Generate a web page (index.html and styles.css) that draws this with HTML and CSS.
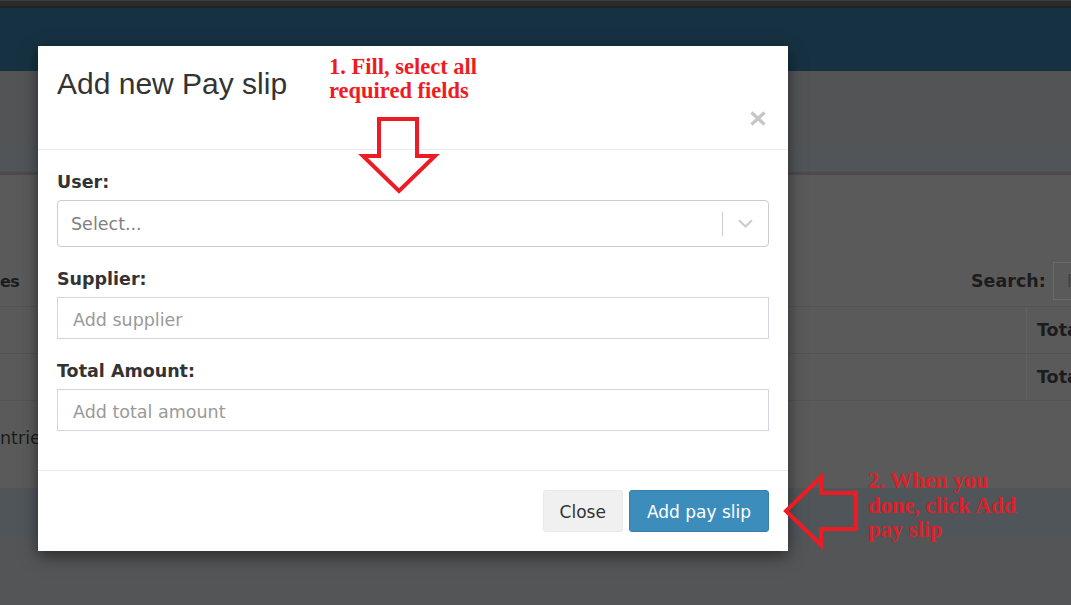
FILE: index.html
```html
<!DOCTYPE html>
<html lang="en">
<head>
<meta charset="utf-8">
<title>Add new Pay slip</title>
<link rel="stylesheet" href="styles.css">
</head>
<body>
<div class="page">
  <div class="top-strip"></div>
  <header class="navbar"></header>
  <section class="page-head"></section>
  <main class="content">
    <div class="toolbar">
      <div class="toolbar-left">es</div>
      <label class="search-label">Search:</label>
      <div class="search-input">F</div>
    </div>
    <div class="table">
      <div class="row"><div class="cell"></div><div class="cell">Type</div><div class="cell cell-last">Total</div></div>
      <div class="row"><div class="cell"></div><div class="cell">Type</div><div class="cell cell-last">Total</div></div>
    </div>
    <div class="info">ntries</div>
  </main>
  <div class="band"></div>
</div>

<div class="modal">
  <div class="modal-header">
    <h4 class="modal-title">Add new Pay slip</h4>
    <div class="close-row">
      <button class="close" type="button" aria-label="Close">
        <svg width="16" height="15" viewBox="0 0 16 15"><path d="M1.5 1.5 L14.5 13.5 M14.5 1.5 L1.5 13.5" stroke="#c6c6c6" stroke-width="3.2" fill="none"/></svg>
      </button>
    </div>
  </div>
  <div class="modal-body">
    <div class="form-group">
      <label class="form-label">User:</label>
      <div class="select">
        <div class="select-value">Select...</div>
        <span class="select-sep"></span>
        <div class="select-arrow">
          <svg width="15" height="9" viewBox="0 0 15 9"><path d="M1 1.2 L7.5 7.5 L14 1.2" stroke="#cccccc" stroke-width="2.2" fill="none"/></svg>
        </div>
      </div>
    </div>
    <div class="form-group">
      <label class="form-label">Supplier:</label>
      <input class="input" type="text" placeholder="Add supplier">
    </div>
    <div class="form-group">
      <label class="form-label">Total Amount:</label>
      <input class="input" type="text" placeholder="Add total amount">
    </div>
  </div>
  <div class="modal-footer">
    <button class="btn btn-default" type="button">Close</button>
    <button class="btn btn-primary" type="button">Add pay slip</button>
  </div>
</div>

<svg class="annot-arrows" width="1071" height="605" viewBox="0 0 1071 605">
  <polygon points="379,119 417,119 417,156 435,156 399,191 363,156 379,156" fill="none" stroke="#ed1c24" stroke-width="4" stroke-linejoin="miter"/>
  <polygon points="786,511 821,477 821,493 856,493 856,529 821,529 821,545" fill="none" stroke="#ed1c24" stroke-width="4" stroke-linejoin="miter"/>
</svg>
<p class="note note-1">1. Fill, select all<br>required fields</p>
<p class="note note-2">2. When you<br>done, click Add<br>pay slip</p>
</body>
</html>
```

FILE: styles.css
```css
* { box-sizing: border-box; }
html, body { margin: 0; padding: 0; }
body {
  width: 1071px;
  height: 605px;
  overflow: hidden;
  position: relative;
  background: #545557;
  font-family: "DejaVu Sans", Verdana, sans-serif;
}

.page { width: 1071px; }
.top-strip {
  height: 8px;
  background: #2b2b2d;
  border-top: 1px solid #3b3b3d;
  border-bottom: 2px solid #222224;
}
.navbar { height: 63px; background: #163242; }
.page-head {
  height: 104px;
  background: linear-gradient(to bottom, #535456 0%, #535456 60%, #50555a 100%);
  border-bottom: 3px solid #4b4b4c;
}
.content {
  height: 313px;
  background: #5a5a5a;
  padding-top: 87px;
  overflow: hidden;
  color: #1c1c1c;
}
.toolbar { display: flex; align-items: center; height: 38px; }
.toolbar-left {
  width: 971px;
  flex-shrink: 0;
  font-weight: bold;
  font-size: 16px;
  letter-spacing: -0.5px;
}
.search-label {
  font-weight: bold;
  font-size: 17.5px;
  margin-right: 7px;
  white-space: nowrap;
}
.search-input {
  width: 150px;
  flex-shrink: 0;
  height: 38px;
  border: 1px solid #6a6a6a;
  padding-left: 13px;
  display: flex;
  align-items: center;
  color: #444;
  font-size: 17.5px;
}
.table { margin-top: 6px; border-bottom: 1px solid #535353; }
.row {
  display: grid;
  grid-template-columns: 733px 293px minmax(0, 1fr);
  border-top: 1px solid #535353;
  height: 47px;
}
.cell {
  display: flex;
  align-items: center;
  padding: 0 10px;
  font-weight: bold;
  font-size: 17.5px;
  white-space: nowrap;
}
.cell-last { border-left: 1px solid #616161; }
.info {
  margin-top: 25px;
  font-size: 17.5px;
  line-height: 24px;
}
.band { height: 49px; background: #50555a; }

/* Modal */
.modal {
  position: absolute;
  left: 38px;
  top: 46px;
  width: 750px;
  background: #fff;
  box-shadow: 0 5px 15px rgba(0, 0, 0, 0.5);
}
.modal-header {
  padding: 21px 19px 23px;
  border-bottom: 1px solid #ececec;
}
.modal-title {
  margin: 0;
  font: 400 30px/33px "Liberation Sans", Arial, sans-serif;
  color: #333;
}
.close-row { display: flex; justify-content: flex-end; margin-top: 11px; }
.close {
  display: block;
  width: 16px;
  height: 15px;
  padding: 0;
  margin: 0 3px 0 0;
  border: 0;
  background: none;
}
.close svg { display: block; }
.modal-body { padding: 20px 19px 19px; }
.form-group { margin-bottom: 20px; }
.form-label {
  display: block;
  font-weight: bold;
  font-size: 17.5px;
  line-height: 24px;
  color: #333;
  margin-bottom: 6px;
}
.select {
  display: flex;
  align-items: center;
  height: 47px;
  border: 1px solid #cccccc;
  border-radius: 4px;
}
.select-value {
  flex: 1;
  padding: 1px 0 0 13px;
  color: #808080;
  font-size: 17.5px;
}
.select-sep { width: 1px; height: 24px; background: #cccccc; }
.select-arrow { padding: 0 15px; display: flex; align-items: center; }
.select-arrow svg { display: block; }
.input {
  display: block;
  width: 100%;
  height: 42px;
  margin: 0;
  border: 1px solid #d3d3e3;
  border-radius: 0;
  padding: 3px 15px 0;
  font: 17.5px "DejaVu Sans", Verdana, sans-serif;
  color: #333;
  outline: none;
}
.input::placeholder { color: #999999; }
.modal-footer {
  border-top: 1px solid #ececec;
  padding: 19px;
  display: flex;
  justify-content: flex-end;
  gap: 6px;
}
.btn {
  height: 42px;
  font: 17px "DejaVu Sans", Verdana, sans-serif;
  border-radius: 3px;
  border: 1px solid;
  padding: 1px 16px 0;
  margin: 0;
}
.btn-default { background: #f0f0f0; border-color: #e9e9e9; color: #333; }
.btn-primary { background: #3c8dbc; border-color: #367fa9; color: #fff; padding: 1px 17px 0; }

/* Annotations */
.annot-arrows {
  position: absolute;
  left: 0;
  top: 0;
  pointer-events: none;
}
.note {
  position: absolute;
  margin: 0;
  font: bold 22.5px/24px "Liberation Serif", "Times New Roman", serif;
  color: #ed1c24;
  white-space: nowrap;
}
.note-1 { left: 329px; top: 55px; }
.note-2 { left: 868px; top: 469px; line-height: 24.5px; color: #dc2128; }
```
